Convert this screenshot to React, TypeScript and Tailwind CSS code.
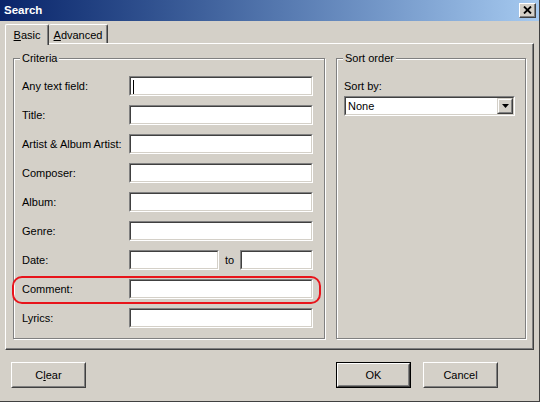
import React from 'react';

const Sunken: React.FC<{ className?: string; children?: React.ReactNode }> = ({ className = '', children }) => (
  <div className={`h-[20px] border border-t-[#808080] border-l-[#808080] border-b-white border-r-white ${className}`}>
    <div className="relative h-full bg-white border border-t-[#404040] border-l-[#404040] border-b-[#d4d0c8] border-r-[#d4d0c8]">
      {children}
    </div>
  </div>
);

const Button: React.FC<{ label: React.ReactNode; isDefault?: boolean }> = ({ label, isDefault }) => (
  <div className={`w-[75px] h-[26px] ${isDefault ? 'border border-black' : ''}`}>
    <div className="h-full border border-t-white border-l-white border-b-[#404040] border-r-[#404040]">
      <div className="h-full flex items-center justify-center border border-t-[#d4d0c8] border-l-[#d4d0c8] border-b-[#808080] border-r-[#808080] text-black">
        {label}
      </div>
    </div>
  </div>
);

const GroupBox: React.FC<{ title: string; className?: string; children?: React.ReactNode }> = ({ title, className = '', children }) => (
  <div className={`relative border border-[#808080] shadow-[inset_1px_1px_0_#fff,1px_1px_0_#fff] ${className}`}>
    <span className="absolute -top-[8px] left-[6px] px-[2px] bg-[#d4d0c8] leading-[14px]">{title}</span>
    {children}
  </div>
);

const rows = ['Any text field:', 'Title:', 'Artist & Album Artist:', 'Composer:', 'Album:', 'Genre:'];

export default function App() {
  return (
    <div className="w-[540px] h-[402px] bg-[#d4d0c8] flex flex-col overflow-hidden border-r border-b border-r-[#404040] border-b-[#404040] text-[11px] text-black font-['Liberation_Sans',Arial,sans-serif]">
      {/* title bar */}
      <div className="h-[21px] shrink-0 flex items-center justify-between pl-[4px] pr-[3px] bg-gradient-to-r from-[#0a246a] to-[#a6caf0]">
        <span className="font-bold text-white text-[11.5px]">Search</span>
        <div className="w-[17px] h-[15px] border border-t-white border-l-white border-b-[#404040] border-r-[#404040] bg-[#d4d0c8]">
          <div className="h-full flex items-center justify-center border-b border-r border-b-[#808080] border-r-[#808080]">
            <svg width="9" height="8" viewBox="0 0 9 8">
              <path d="M1 0.5 L8 7.5 M8 0.5 L1 7.5" stroke="#000" strokeWidth="1.8" />
            </svg>
          </div>
        </div>
      </div>

      {/* tabs */}
      <div className="h-[21px] mt-[1px] px-[5px] flex items-end">
        <div className="relative z-10 h-[21px] -mb-[2px] w-[44px] bg-[#d4d0c8] rounded-t-[2px] border-t border-l border-r border-t-white border-l-white border-r-[#404040] shadow-[inset_-1px_0_0_#808080] flex items-start justify-center pt-[2px]">
          <span><span className="underline">B</span>asic</span>
        </div>
        <div className="h-[19px] w-[59px] bg-[#d4d0c8] rounded-t-[2px] border-t border-r border-t-white border-r-[#404040] shadow-[inset_-1px_0_0_#808080] flex items-start justify-center pt-[2px]">
          <span><span className="underline">A</span>dvanced</span>
        </div>
      </div>

      {/* tab panel */}
      <div className="mx-[5px] h-[307px] border border-t-white border-l-white border-b-[#404040] border-r-[#404040] shadow-[inset_-1px_-1px_0_#808080] flex gap-[11px] pl-[7px] pt-[14px]">
        <GroupBox title="Criteria" className="w-[312px] h-[281px] pl-[8px] pr-[11px] pt-[17px]">
          <div className="flex flex-col gap-[9px]">
            {rows.map((r, i) => (
              <div key={r} className="flex items-center">
                <span className="w-[107px]">{r}</span>
                <Sunken className="w-[184px]">
                  {i === 0 && <span className="absolute left-[2px] top-[2px] w-[1px] h-[14px] bg-black" />}
                </Sunken>
              </div>
            ))}
            <div className="flex items-center">
              <span className="w-[107px]">Date:</span>
              <Sunken className="w-[90px]" />
              <span className="w-[21px] text-center">to</span>
              <Sunken className="w-[73px]" />
            </div>
            <div className="relative flex items-center">
              <span className="absolute -left-[10px] -right-[8px] -top-[3px] -bottom-[5px] rounded-[10px] border-2 border-[#e8141b]" />
              <span className="w-[107px]">Comment:</span>
              <Sunken className="w-[184px]" />
            </div>
            <div className="flex items-center">
              <span className="w-[107px]">Lyrics:</span>
              <Sunken className="w-[184px]" />
            </div>
          </div>
        </GroupBox>
        <GroupBox title="Sort order" className="w-[190px] h-[281px] pl-[7px] pt-[20px]">
          <div className="leading-[14px]">Sort by:</div>
          <Sunken className="w-[171px] mt-[3px]">
            <div className="flex h-full items-center justify-between">
              <span className="pl-[2px]">None</span>
              <div className="w-[16px] h-full border border-t-[#d4d0c8] border-l-[#d4d0c8] border-b-[#404040] border-r-[#404040] bg-[#d4d0c8]">
                <div className="h-full flex items-center justify-center border border-t-white border-l-white border-b-[#808080] border-r-[#808080]">
                  <svg width="7" height="4" viewBox="0 0 7 4">
                    <path d="M0 0 H7 L3.5 4 Z" fill="#000" />
                  </svg>
                </div>
              </div>
            </div>
          </Sunken>
        </GroupBox>
      </div>

      {/* buttons */}
      <div className="flex items-center pl-[11px] pr-[41px] mt-[12px]">
        <Button label={<span>C<span className="underline">l</span>ear</span>} />
        <div className="flex-1" />
        <Button label="OK" isDefault />
        <div className="w-[12px]" />
        <Button label="Cancel" />
      </div>
    </div>
  );
}
